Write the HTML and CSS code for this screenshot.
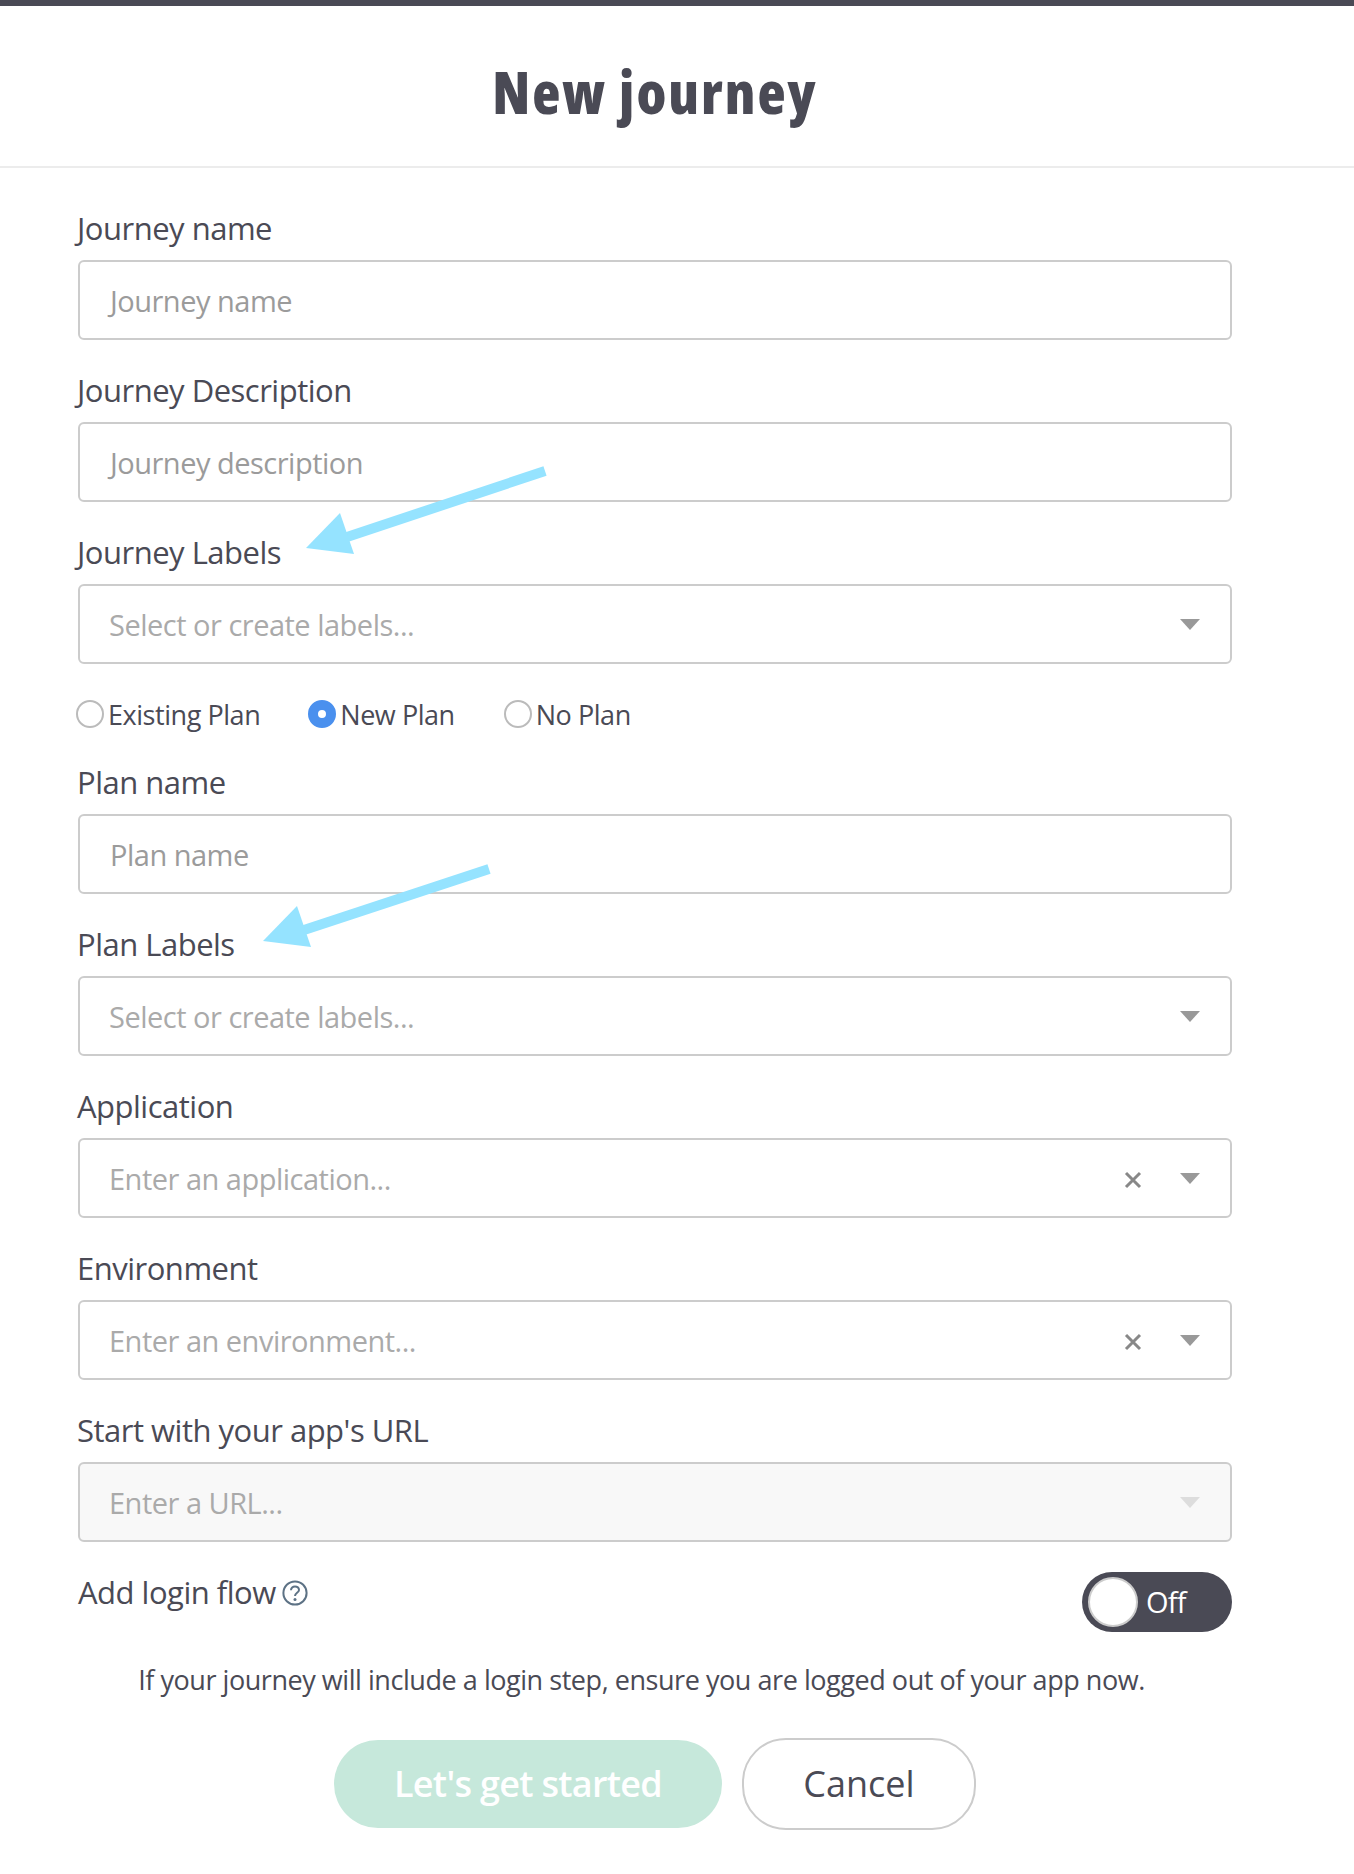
FILE: index.html
```html
<!DOCTYPE html>
<html lang="en">
<head>
<meta charset="utf-8">
<title>New journey</title>
<link rel="stylesheet" href="styles.css">
</head>
<body>
<div class="page">
  <header class="header"><h1 class="title">New journey</h1></header>
  <form class="form">
    <div class="field">
      <label class="label">Journey name</label>
      <div class="box"><span class="ph">Journey name</span></div>
    </div>
    <div class="field">
      <label class="label">Journey Description</label>
      <div class="box"><span class="ph">Journey description</span></div>
    </div>
    <div class="field">
      <label class="label">Journey Labels</label>
      <div class="box"><span class="ph light">Select or create labels...</span><span class="caret"></span></div>
    </div>
    <div class="radios">
      <span class="radio-item r1"><span class="radio"></span>Existing Plan</span>
      <span class="radio-item r2"><span class="radio on"></span>New Plan</span>
      <span class="radio-item"><span class="radio"></span>No Plan</span>
    </div>
    <div class="field">
      <label class="label">Plan name</label>
      <div class="box"><span class="ph">Plan name</span></div>
    </div>
    <div class="field">
      <label class="label">Plan Labels</label>
      <div class="box"><span class="ph light">Select or create labels...</span><span class="caret"></span></div>
    </div>
    <div class="field">
      <label class="label">Application</label>
      <div class="box"><span class="ph light">Enter an application...</span>
        <svg class="clear" viewBox="0 0 18 18"><path d="M2 2 16 16M16 2 2 16"/></svg><span class="caret"></span></div>
    </div>
    <div class="field">
      <label class="label">Environment</label>
      <div class="box"><span class="ph light">Enter an environment...</span>
        <svg class="clear" viewBox="0 0 18 18"><path d="M2 2 16 16M16 2 2 16"/></svg><span class="caret"></span></div>
    </div>
    <div class="field">
      <label class="label">Start with your app's URL</label>
      <div class="box disabled"><span class="ph light">Enter a URL...</span><span class="caret pale"></span></div>
    </div>
    <div class="login-row">
      <span class="login-label">Add login flow
        <svg class="help" viewBox="0 0 26 26"><circle cx="13" cy="13" r="11.6"/><path d="M9 10.2c0-2.4 1.8-3.8 4-3.8s4 1.400 4 3.500c0 2.800-4 3-4 6"/><circle class="dot" cx="13" cy="19.600" r="1.500"/></svg>
      </span>
      <span class="toggle"><span class="knob"></span><span class="toggle-text">Off</span></span>
    </div>
    <p class="note">If your journey will include a login step, ensure you are logged out of your app now.</p>
    <div class="actions">
      <button type="button" class="btn primary">Let's get started</button>
      <button type="button" class="btn cancel">Cancel</button>
    </div>
  </form>
  <svg class="arrow a1" viewBox="0 0 250 95"><path class="shaft" d="M239 3 41 69"/><path class="head" d="M0 80 34 45 48 86Z"/></svg>
  <svg class="arrow a2" viewBox="0 0 250 95"><path class="shaft" d="M226 8 41 69"/><path class="head" d="M0 80 34 45 48 86Z"/></svg>
</div>
</body>
</html>
```

FILE: styles.css
```css
* { box-sizing: border-box; }
html, body { margin: 0; padding: 0; background: #fff; }
body { font-family: "Open Sans", "Noto Sans", sans-serif; color: #4a4a55; }
.page { position: relative; width: 1354px; height: 1874px; border-top: 6px solid #4a4a55; overflow: hidden; }
.header { height: 162px; border-bottom: 2px solid #ececec; display: flex; align-items: center; justify-content: center; padding-right: 44px; }
.title { margin: 0; font-size: 58px; font-weight: 800; font-stretch: 75%; letter-spacing: 2px; line-height: 1; position: relative; top: 6px; }
.form { padding: 40px 122px 0 78px; }
.field { margin-bottom: 30px; }
.label { display: block; height: 42px; line-height: 41px; margin: 0 0 10px -1px; font-size: 31px; letter-spacing: -.5px; }
.box { height: 80px; border: 2px solid #ccc; border-radius: 6px; display: flex; align-items: center; padding: 1px 30px 0 29px; background: #fff; }
.box.disabled { background: #f8f8f8; }
.ph { flex: 1; font-size: 29px; letter-spacing: -.5px; color: #9b9b9b; padding-left: 1px; }
.ph.light { color: #aaa; padding-left: 0; }
.caret { width: 0; height: 0; border-left: 10px solid transparent; border-right: 10px solid transparent; border-top: 11px solid #999; margin-top: -1px; }
.caret.pale { border-top-color: #ddd; }
.clear { width: 18px; height: 18px; margin: 3px 38px 0 0; fill: none; stroke: #888; stroke-width: 3; }
.radios { display: flex; align-items: center; height: 42px; margin: -1px 0 27px -2px; font-size: 27px; letter-spacing: -.45px; }
.radio-item { display: flex; align-items: center; gap: 4px; }
.r1 { margin-right: 48px; }
.r2 { margin-right: 49px; }
.radio { width: 28px; height: 28px; border-radius: 50%; border: 2px solid #bbb; background: #fff; }
.radio.on { border: 10px solid #4a90ee; }
.login-row { display: flex; justify-content: space-between; align-items: flex-start; height: 60px; }
.login-label { display: flex; align-items: center; gap: 6px; font-size: 31px; letter-spacing: -.5px; line-height: 41px; }
.help { width: 26px; height: 26px; fill: none; stroke: #5d7285; stroke-width: 2; }
.help .dot { fill: #5d7285; stroke: none; }
.toggle { width: 150px; height: 60px; border-radius: 30px; background: #4a4a55; display: flex; align-items: center; padding-left: 6px; gap: 8px; }
.knob { width: 50px; height: 50px; border-radius: 50%; background: #fff; border: 2px solid #ccc; }
.toggle-text { color: #fff; font-size: 29px; letter-spacing: -.8px; margin-top: -2px; }
.note { margin: 28px 0 0; text-align: center; font-size: 27px; letter-spacing: -.45px; line-height: 40px; padding-right: 27px; }
.actions { display: flex; justify-content: center; align-items: center; gap: 20px; margin-top: 38px; }
.btn { font-family: inherit; font-size: 36px; border-radius: 44px; cursor: pointer; padding: 0 0 1px; }
.primary { width: 388px; height: 88px; border: 0; background: #c6e8db; color: #fff; font-weight: 600; letter-spacing: -.7px; }
.cancel { width: 234px; height: 92px; border: 2px solid #ccc; background: #fff; color: #4a4a55; }
.arrow { position: absolute; width: 250px; height: 95px; overflow: visible; }
.shaft { fill: none; stroke: #95e3ff; stroke-width: 10; }
.head { fill: #95e3ff; }
.a1 { left: 306px; top: 462px; }
.a2 { left: 263px; top: 855px; }
```
